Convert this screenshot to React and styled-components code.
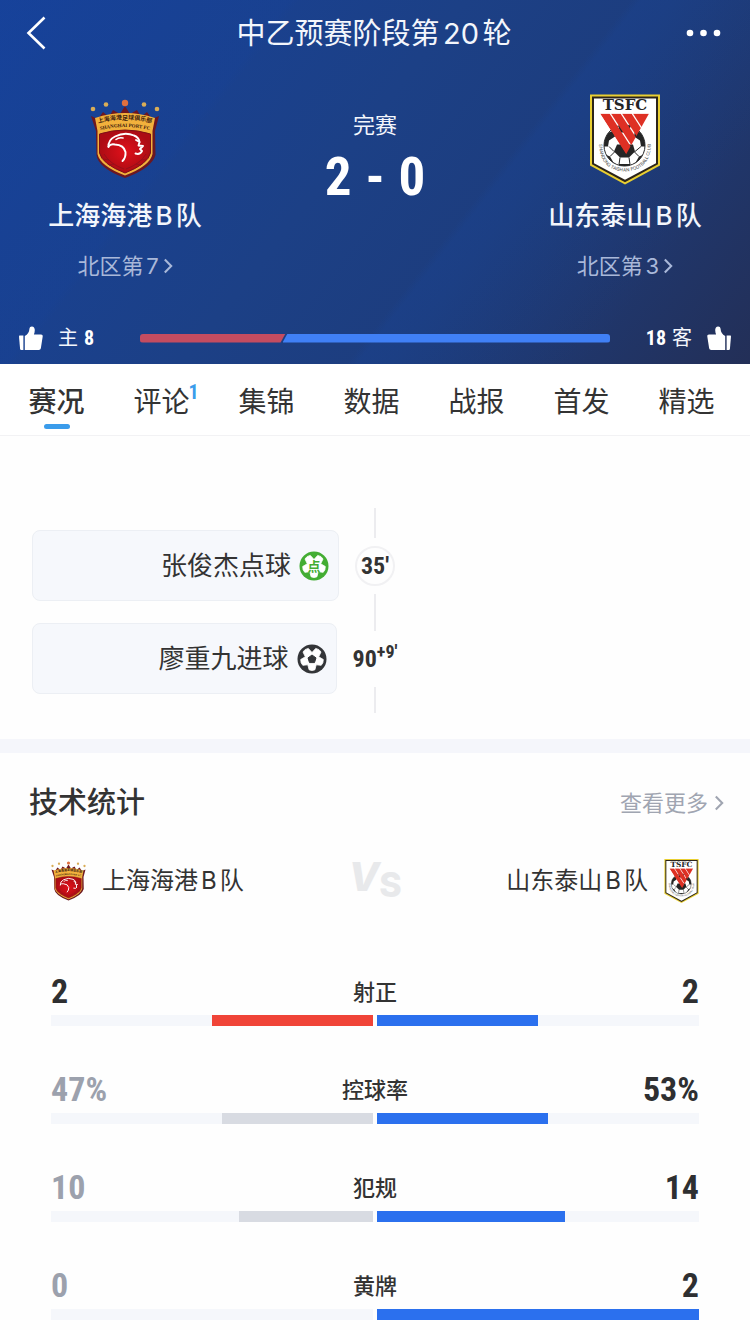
import React from 'react';
import styled, { createGlobalStyle } from 'styled-components';

const GlobalStyle = createGlobalStyle`
    *, *::before, *::after {
        box-sizing: border-box;
    }

    body {
        margin: 0;
        background: #fefefe;
        color: #333333;
        font-family: Inter, "Noto Sans CJK SC", sans-serif;
        text-autospace: normal;
    }

    h1, h2, p {
        margin: 0;
        font-weight: 400;
    }

    button {
        border: 0;
        padding: 0;
        background: none;
        color: inherit;
        font: inherit;
        cursor: pointer;
    }

    a {
        color: inherit;
        text-decoration: none;
    }

    svg {
        display: block;
        flex: none;
    }
`

const numberFont = '"Roboto Condensed", "Liberation Sans Narrow", "DejaVu Sans Condensed", "Noto Sans CJK SC", sans-serif';

const StyledHeader = styled.header`
    color: #f3f6fc;
    background:
        linear-gradient(128deg, rgba(20, 66, 156, 0.2) 0 28%, transparent 29%),
        linear-gradient(128deg, transparent 0 61%, rgba(24, 70, 156, 0.24) 62%, transparent 84%),
        linear-gradient(128deg, #17429a 0%, #1c4086 45%, #1d3d7e 65%, #232f57 100%);
`

const StyledNav = styled.nav`
    display: flex;
    align-items: center;
    justify-content: space-between;
    height: 66px;
    padding: 0 28px 0 26px;
`

const StyledTitle = styled.h1`
    padding-top: 2px;
    font-size: 29px;
    line-height: 40px;
`

const StyledNavButton = styled.button`
    display: flex;
    justify-content: ${props => props.$end ? 'flex-end' : 'flex-start'};
    width: 40px;
`

const StyledMatch = styled.div`
    display: grid;
    grid-template-columns: 250px 1fr 250px;
    height: 248px;
    padding-top: 24px;
`

const StyledTeam = styled.div`
    display: flex;
    flex-direction: column;
    align-items: center;
`

const StyledCrest = styled.div`
    display: flex;
    align-items: center;
    height: 98px;
`

const StyledTeamName = styled.h2`
    margin-top: 9px;
    font-size: 26px;
    font-weight: 500;
    line-height: 38px;
`

const StyledRank = styled.a`
    display: flex;
    align-items: center;
    gap: 4px;
    margin-top: 15px;
    color: #a9b8d9;
    font-size: 22px;
    line-height: 32px;
`

const StyledResult = styled.div`
    display: flex;
    flex-direction: column;
    align-items: center;
    padding-top: 19px;
`

const StyledState = styled.p`
    font-size: 22px;
    line-height: 32px;
`

const StyledScore = styled.p`
    display: flex;
    gap: 14px;
    margin-top: 6px;
    color: #ffffff;
    font-family: ${numberFont};
    font-size: 53px;
    font-weight: 700;
    line-height: 60px;
`

const StyledVotes = styled.div`
    display: flex;
    align-items: center;
    height: 50px;
    padding: 0 18px 2px;
`

const StyledVote = styled.button`
    display: flex;
    align-items: center;
    flex-direction: ${props => props.$away ? 'row-reverse' : 'row'};
    gap: 15px;
    width: 122px;
`

const StyledVoteText = styled.span`
    display: flex;
    align-items: center;
    gap: 6px;
    font-size: 20px;
    line-height: 28px;

    b {
        color: #ffffff;
        font-family: ${numberFont};
    }
`

const StyledVoteBar = styled.div`
    display: flex;
    flex: 1;
    height: 9px;
    border-radius: 3px;
    overflow: hidden;
`

const StyledVoteHome = styled.div`
    flex: ${props => props.$votes};
    background: #c44c60;
    clip-path: polygon(0 0, 100% 0, calc(100% - 5px) 100%, 0 100%);
`

const StyledVoteAway = styled.div`
    flex: ${props => props.$votes};
    margin-left: -3px;
    background: #4080f6;
    clip-path: polygon(5px 0, 100% 0, 100% 100%, 0 100%);
`

const StyledTabs = styled.nav`
    display: grid;
    grid-template-columns: repeat(7, 1fr);
    height: 72px;
    padding: 0 11px 0 4px;
    border-bottom: 1px solid #f2f2f4;
    background: #ffffff;
`

const StyledTab = styled.button`
    position: relative;
    height: 71px;
    font-size: 28px;
    font-weight: ${props => props.$active ? 500 : 400};

    &::after {
        content: '';
        display: ${props => props.$active ? 'block' : 'none'};
        position: absolute;
        bottom: 6px;
        left: 50%;
        width: 26px;
        height: 5px;
        margin-left: -13px;
        border-radius: 3px;
        background: #3b9ceb;
    }
`

const StyledCount = styled.sup`
    position: absolute;
    top: 16px;
    left: 50%;
    margin-left: 27px;
    color: #3b9ceb;
    font-family: ${numberFont};
    font-size: 20px;
    font-weight: 700;
    line-height: 24px;
`

const StyledTimeline = styled.section`
    display: flex;
    flex-direction: column;
    padding: 72px 32px 26px;
`

const StyledLine = styled.div`
    align-self: center;
    width: 2px;
    height: ${props => props.$height}px;
    background: #ececef;
`

const StyledEvent = styled.div`
    display: grid;
    grid-template-columns: minmax(0, 1fr) auto minmax(0, 1fr);
    align-items: center;
    gap: 16px;
    margin: -8px 0 -7px;
`

const StyledEventCard = styled.div`
    display: flex;
    align-items: center;
    justify-content: flex-end;
    gap: 8px;
    height: 71px;
    padding: 0 9px;
    border: 1px solid #eceff4;
    border-radius: 8px;
    background: #f6f8fc;
    font-size: 26px;
    line-height: 38px;
`

const StyledTime = styled.time`
    display: flex;
    align-items: center;
    justify-content: center;
    min-width: 40px;
    height: 40px;
    border: ${props => props.$plain ? '0' : '2px solid #f1f1f3'};
    border-radius: 20px;
    font-family: ${numberFont};
    font-size: 24px;
    font-weight: 700;
    line-height: 32px;

    small {
        align-self: flex-start;
        font-size: 18px;
        line-height: 26px;
    }
`

const StyledBand = styled.div`
    height: 14px;
    background: #f5f6fb;
`

const StyledSectionHead = styled.div`
    display: flex;
    align-items: center;
    justify-content: space-between;
    height: 100px;
    padding: 0 26px 0 29px;
`

const StyledSectionTitle = styled.h2`
    font-size: 29px;
    font-weight: 500;
    line-height: 42px;
`

const StyledMore = styled.a`
    display: flex;
    align-items: center;
    gap: 6px;
    color: #a0a5b1;
    font-size: 22px;
    line-height: 32px;
`

const StyledVersus = styled.div`
    display: flex;
    align-items: center;
    justify-content: space-between;
    height: 56px;
    padding: 0 51px;
`

const StyledSide = styled.div`
    display: flex;
    align-items: center;
    flex-direction: ${props => props.$away ? 'row-reverse' : 'row'};
    gap: 16px;
    flex: 1;
    font-size: 24px;
    line-height: 36px;
`

const StyledStats = styled.section`
    display: flex;
    flex-direction: column;
    gap: 43px;
    padding: 62px 51px 10px;
`

const StyledStat = styled.div`
    display: grid;
    grid-template-columns: 1fr auto 1fr;
    align-items: center;
    row-gap: 3px;
`

const StyledValue = styled.span`
    color: ${props => props.$muted ? '#9ca1ad' : '#2e2f31'};
    font-family: ${numberFont};
    font-size: 34px;
    font-weight: 700;
    line-height: 41px;
    text-align: ${props => props.$away ? 'right' : 'left'};
`

const StyledStatName = styled.span`
    font-size: 22px;
    font-weight: 500;
    line-height: 32px;
`

const StyledBars = styled.div`
    grid-column: 1 / -1;
    display: grid;
    grid-template-columns: 1fr 1fr;
    gap: 4px;
`

const StyledTrack = styled.div`
    display: flex;
    justify-content: ${props => props.$away ? 'flex-start' : 'flex-end'};
    height: 11px;
    background: #f5f7fb;
`

const StyledFill = styled.div`
    background: ${props => props.$color};
`

const ArrowIcon = ({ color }) => (
    <svg width="10" height="16" viewBox="0 0 12 20" fill="none" stroke={color} strokeWidth="2.6">
        <path d="M2 2l8 8-8 8" />
    </svg>
)

const ThumbIcon = ({ flip }) => (
    <svg width="25" height="25" viewBox="0 0 25 25" fill="#ffffff">
        <g transform={flip ? 'translate(25 0) scale(-1 1)' : undefined}>
            <path d="M1.6 9.6H5.4V24H3.2Q2.2 24 2.1 23L1 10.4Q1 9.600 1.6 9.6z" />
            <path d="M6.8 10C9.8 8.4 11.2 6 11.4 2.9 11.5 1.2 12.6.4 13.9.4 15.7.4 16.8 2 16.8 4 16.8 5.8 16.4 7.2 15.900 8.6H23C24.2 8.6 24.9 9.4 24.7 10.6L22.9 22C22.7 23.3 21.9 24 20.7 24H6.8z" />
        </g>
    </svg>
)

const BallIcon = ({ color, children }) => (
    <svg width="30" height="30" viewBox="0 0 30 30">
        <circle cx="15" cy="15" r="14.5" fill={color} />
        <path
            d="M15 8.5L18.7 4.4Q22.500 5 24 8L21.7 12.8 26.3 15.5Q26.500 19 24.2 21.3L19.200 20.800 17.9 25.800Q15 27.200 12.1 25.800L10.8 20.800 5.8 21.3Q3.5 19 3.7 15.5L8.3 12.8 6 8Q7.5 5 11.3 4.4z"
            fill="#ffffff"
            stroke="#ffffff"
            strokeWidth="0.8"
            strokeLinejoin="round"
        />
        {children}
    </svg>
)

const GoalIcon = () => (
    <BallIcon color="#333538">
        <path d="M15 11l4 2.900-1.500 4.700h-5l-1.500-4.700z" fill="#333538" stroke="#333538" strokeLinejoin="round" />
    </BallIcon>
)

const PenaltyIcon = () => (
    <BallIcon color="#43ad33">
        <text x="15" y="20" textAnchor="middle" fontSize="13" fontWeight="700" fill="#43ad33">点</text>
    </BallIcon>
)

const PortCrest = ({ width, height }) => (
    <svg width={width} height={height} viewBox="0 0 70 80">
        <defs>
            <path id="port-cn" d="M5 25q30-9 60 0" />
            <path id="port-en" d="M5 32.5q30-9 60 0" />
            <radialGradient id="port-red">
                <stop offset="0" stopColor="#e0101a" />
                <stop offset="1" stopColor="#ac0c14" />
            </radialGradient>
        </defs>
        <path
            d="M1 17l7 3 5-7 6 5 4-7 7 4 5-8 5 8 7-4 4 7 6-5 5 7 7-3-4 15 .5 24Q62 69 35 79 8 69 6.5 56L6 32z"
            fill="#6d1720"
        />
        <path d="M5 19q30-10 60 0l-2.500 13v23Q60 67 35 76.5 10 67 7.5 55V32z" fill="#f2b13c" />
        <path d="M9.5 35q25.5-8 51 0v19Q58 65 35 74 12 65 9.5 54z" fill="url(#port-red)" stroke="#7e1016" />
        <g fill="#3d1c10" fontWeight="700" textAnchor="middle">
            <text fontSize="6"><textPath href="#port-cn" startOffset="50%">上海海港足球俱乐部</textPath></text>
            <text fontSize="5" fontFamily="Liberation Serif"><textPath href="#port-en" startOffset="50%">SHANGHAI PORT FC</textPath></text>
        </g>
        <g fill="none" stroke="#98101a">
            <path d="M14 55q6 10 20 15M56 55q-6 10-20 15M13 60l6 1M57 60l-6 1M19 66l5-1M51 66l-5-1" />
        </g>
        <g fill="none" stroke="#ffffff" strokeLinecap="round" strokeLinejoin="round">
            <path d="M18.5 48Q18 41 25 37.5 35 32.5 44 36.5 49 38.5 49.5 43" strokeWidth="1.9" />
            <path d="M18.5 47.5Q20.5 44.5 25 45.5 34 46 35.5 53 36 58.5 32.5 62" strokeWidth="1.9" />
            <path d="M26 40.5q3-2.5 7-1.5" strokeWidth="1.6" />
            <path d="M46 41l3.5 2-1 3.5 4.5.5-3 3 2 2q-2 4-6.5 2.5" strokeWidth="1.9" />
        </g>
        <g fill="#d9ad57">
            <circle cx="3" cy="10" r="2.3" />
            <circle cx="16" cy="5.5" r="2.3" />
            <circle cx="54" cy="5.5" r="2.3" />
            <circle cx="67" cy="10" r="2.3" />
            <circle cx="35" cy="4" r="3.2" fill="#e0703f" />
        </g>
    </svg>
)

const TaishanCrest = ({ width, height }) => (
    <svg width={width} height={height} viewBox="0 0 70 90">
        <defs>
            <path id="taishan-ring" d="M9 50Q10 76 35 77 60 76 61 50" />
            <clipPath id="taishan-ball"><circle cx="34.5" cy="51" r="20.5" /></clipPath>
            <clipPath id="taishan-wedge"><path d="M10 19h49L36 60z" /></clipPath>
        </defs>
        <path d="M0 0h70v71L35 90 0 71z" fill="#e9cf32" />
        <path d="M2 2h66v67.8L35 87.7 2 69.8z" fill="#2b241a" />
        <path d="M4 4h62v64.7L35 85.3 4 68.7z" fill="#ffffff" />
        <text x="35" y="15.5" textAnchor="middle" fontFamily="DejaVu Serif" fontSize="15" fontWeight="700" fill="#252525">TSFC</text>
        <circle cx="34.5" cy="51" r="20.5" fill="#ffffff" stroke="#252525" />
        <g clipPath="url(#taishan-ball)" fill="#252525">
            <path d="M27 50h16l2 7-6 6h-9l-6-6z" />
            <path d="M12 52l4-13 8-3 1 6-6 4-1 6z" />
            <path d="M57 52l-4-13-8-3-1 6 6 4 1 6z" />
            <path d="M13 59l7 3 4 7-3 4-9-7zM56 59l-7 3-4 7 3 4 9-7z" />
            <path d="M28 30h13l-2 8h-9zM29 69.5h11v4H29z" />
            <path d="M25 57l-5 5M44 57l5 5M30 63l-1 7M39 63l1 7M19 52l5 5M51 52l-6 5" stroke="#252525" />
        </g>
        <g clipPath="url(#taishan-wedge)" fill="#de3024">
            <path d="M10 19h9.500l27 42h-9.500z" />
            <path d="M21 19h9.500l27 42h-9.500z" />
            <path d="M32 19h9.500l27 42h-9.500z" />
            <path d="M43 19h17l20 42h-10z" />
        </g>
        <text fontSize="4.5" fill="#444444" textAnchor="middle">
            <textPath href="#taishan-ring" startOffset="50%">SHANDONG TAISHAN FOOTBALL CLUB</textPath>
        </text>
    </svg>
)

const StyledVersusMark = styled.div`
    display: flex;
    align-items: flex-start;
    color: #e8e9eb;
    font-size: 38px;
    font-weight: 800;
    line-height: 48px;

    i {
        font-size: 40px;
    }

    span {
        padding-top: 8px;
        font-size: 34px;
    }
`

const tabs = ['赛况', '评论', '集锦', '数据', '战报', '首发', '精选'];

const stats = [
    { name: '射正', home: 2, away: 2 },
    { name: '控球率', home: 47, away: 53, unit: '%' },
    { name: '犯规', home: 10, away: 14 },
    { name: '黄牌', home: 0, away: 2 },
];

function Stat({ name, home, away, unit = '' }) {
    const total = home + away;

    return (
        <StyledStat>
            <StyledValue $muted={home < away}>{home}{unit}</StyledValue>
            <StyledStatName>{name}</StyledStatName>
            <StyledValue $away $muted={away < home}>{away}{unit}</StyledValue>
            <StyledBars>
                <StyledTrack>
                    <StyledFill $color={home < away ? '#d8dbe2' : '#f04438'} style={{ width: `${home / total * 100}%` }} />
                </StyledTrack>
                <StyledTrack $away>
                    <StyledFill $color={away < home ? '#d8dbe2' : '#2b70ee'} style={{ width: `${away / total * 100}%` }} />
                </StyledTrack>
            </StyledBars>
        </StyledStat>
    )
}

function App() {
    return (
        <>
            <GlobalStyle />
            <StyledHeader>
                <StyledNav>
                    <StyledNavButton aria-label="返回">
                        <svg width="20" height="34" viewBox="0 0 20 34" fill="none" stroke="#ffffff" strokeWidth="2.6">
                            <path d="M18.5 1.5L2.5 17l16 15.5" />
                        </svg>
                    </StyledNavButton>
                    <StyledTitle>中乙预赛阶段第20轮</StyledTitle>
                    <StyledNavButton $end aria-label="更多">
                        <svg width="36" height="8" viewBox="0 0 36 8" fill="#ffffff">
                            <circle cx="4" cy="4" r="3.3" />
                            <circle cx="17.5" cy="4" r="3.3" />
                            <circle cx="31" cy="4" r="3.3" />
                        </svg>
                    </StyledNavButton>
                </StyledNav>
                <StyledMatch>
                    <StyledTeam>
                        <StyledCrest><PortCrest width={70} height={80} /></StyledCrest>
                        <StyledTeamName>上海海港B队</StyledTeamName>
                        <StyledRank href="#home-rank">北区第7<ArrowIcon color="#a9b8d9" /></StyledRank>
                    </StyledTeam>
                    <StyledResult>
                        <StyledState>完赛</StyledState>
                        <StyledScore><span>2</span><span>-</span><span>0</span></StyledScore>
                    </StyledResult>
                    <StyledTeam>
                        <StyledCrest><TaishanCrest width={70} height={91} /></StyledCrest>
                        <StyledTeamName>山东泰山B队</StyledTeamName>
                        <StyledRank href="#away-rank">北区第3<ArrowIcon color="#a9b8d9" /></StyledRank>
                    </StyledTeam>
                </StyledMatch>
                <StyledVotes>
                    <StyledVote>
                        <ThumbIcon />
                        <StyledVoteText>主<b>8</b></StyledVoteText>
                    </StyledVote>
                    <StyledVoteBar>
                        <StyledVoteHome $votes={8} />
                        <StyledVoteAway $votes={18} />
                    </StyledVoteBar>
                    <StyledVote $away>
                        <ThumbIcon flip />
                        <StyledVoteText><b>18</b>客</StyledVoteText>
                    </StyledVote>
                </StyledVotes>
            </StyledHeader>
            <StyledTabs>
                {tabs.map((tab, i) => (
                    <StyledTab key={tab} $active={i === 0}>
                        {tab}
                        {tab === '评论' && <StyledCount>1</StyledCount>}
                    </StyledTab>
                ))}
            </StyledTabs>
            <StyledTimeline>
                <StyledLine $height={30} />
                <StyledEvent>
                    <StyledEventCard>张俊杰点球<PenaltyIcon /></StyledEventCard>
                    <StyledTime>35′</StyledTime>
                </StyledEvent>
                <StyledLine $height={37} />
                <StyledEvent>
                    <StyledEventCard>廖重九进球<GoalIcon /></StyledEventCard>
                    <StyledTime $plain>90<small>+9′</small></StyledTime>
                </StyledEvent>
                <StyledLine $height={26} />
            </StyledTimeline>
            <StyledBand />
            <StyledSectionHead>
                <StyledSectionTitle>技术统计</StyledSectionTitle>
                <StyledMore href="#stats">查看更多<ArrowIcon color="#a0a5b1" /></StyledMore>
            </StyledSectionHead>
            <StyledVersus>
                <StyledSide><PortCrest width={35} height={40} />上海海港B队</StyledSide>
                <StyledVersusMark><i>V</i><span>S</span></StyledVersusMark>
                <StyledSide $away><TaishanCrest width={35} height={44} />山东泰山B队</StyledSide>
            </StyledVersus>
            <StyledStats>
                {stats.map(stat => <Stat key={stat.name} {...stat} />)}
            </StyledStats>
        </>
    )
};

export default App;
